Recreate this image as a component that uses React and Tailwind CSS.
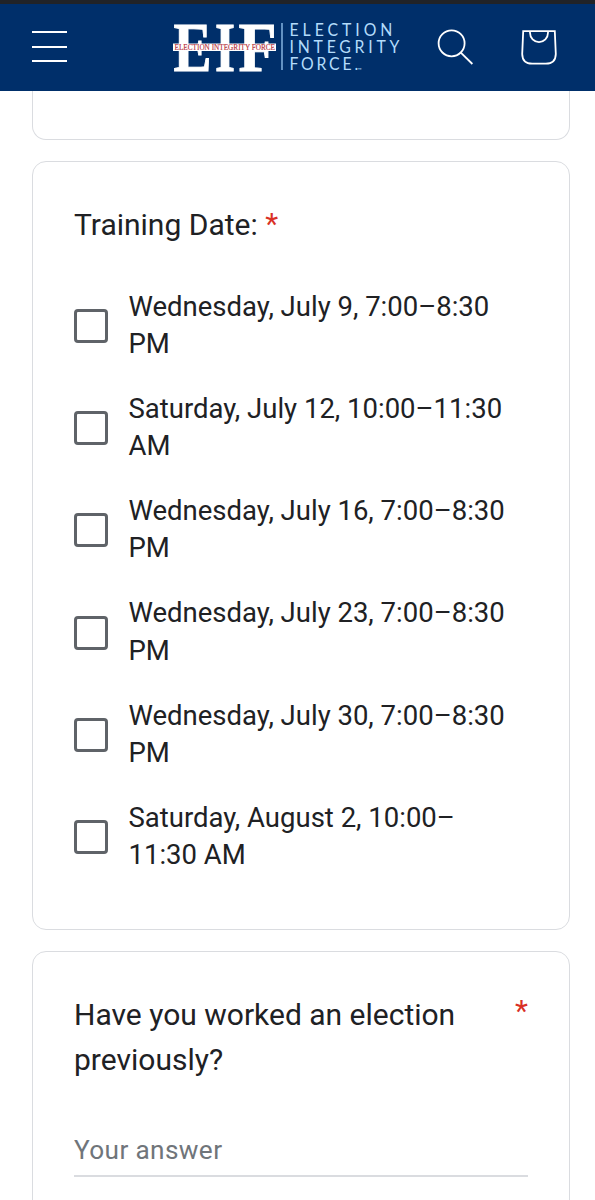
const trainingDates = [
  'Wednesday, July 9, 7:00–8:30 PM',
  'Saturday, July 12, 10:00–11:30 AM',
  'Wednesday, July 16, 7:00–8:30 PM',
  'Wednesday, July 23, 7:00–8:30 PM',
  'Wednesday, July 30, 7:00–8:30 PM',
  'Saturday, August 2, 10:00–11:30 AM',
]

function Logo() {
  return (
    <svg width="232" height="87" viewBox="172 4 232 87" role="img" aria-label="Election Integrity Force">
      <g fill="#fff" stroke="#fff" strokeWidth="1" fontFamily="Liberation Serif, serif" fontWeight="700" fontSize="70">
        <text x="173.5" y="70.5" textLength="38" lengthAdjust="spacingAndGlyphs">E</text>
        <text x="215" y="70.5" textLength="20" lengthAdjust="spacingAndGlyphs">I</text>
        <text x="238.5" y="70.5" textLength="38" lengthAdjust="spacingAndGlyphs">F</text>
      </g>
      {/* white band across the letters */}
      <rect x="173" y="43.5" width="103" height="7.5" fill="#fff" />
      <text x="174.5" y="50.2" textLength="100.5" lengthAdjust="spacingAndGlyphs" fill="#b5303a" stroke="#b5303a" strokeWidth="0.15" fontFamily="Liberation Serif, serif" fontSize="8.8">
        ELECTION INTEGRITY FORCE
      </text>
      <path d="M282 23v47" stroke="#8dbce8" strokeWidth="1.4" />
      <g transform="translate(289.5 0) scale(0.88 1)" fill="#b3dcfb" fontFamily="Lato, sans-serif" fontSize="18">
        <text x="0" y="36" textLength="117">ELECTION</text>
        <text x="0" y="53" textLength="125">INTEGRITY</text>
        <text x="0" y="70" textLength="78">FORCE.</text>
        <text x="77.5" y="72.5" fontSize="6">™</text>
      </g>
    </svg>
  )
}

function Header() {
  return (
    <header className="flex h-[91px] shrink-0 items-center border-t-4 border-[#212327] bg-[#002f6a] pl-8 text-white">
      <button aria-label="Menu" className="mb-[2px] flex w-[35px] flex-col gap-[12.5px]">
        <span className="h-[2px] bg-white" />
        <span className="h-[2px] bg-white" />
        <span className="h-[2px] bg-white" />
      </button>
      <div className="ml-[105px]">
        <Logo />
      </div>
      <button aria-label="Search" className="ml-[33px]">
        <svg width="38" height="38" viewBox="0 0 38 38" fill="none" stroke="currentColor" strokeWidth="1.8">
          <circle cx="14.6" cy="14.3" r="13" />
          <path d="M23.8 23.6l11.6 11.4" />
        </svg>
      </button>
      <button aria-label="Cart" className="ml-[44.5px]">
        <svg width="38" height="38" viewBox="0 0 38 38" fill="none" stroke="currentColor" strokeWidth="1.8">
          <path d="M3.2 2.2H34.8L35.8 25q-.2 9.7-10 9.7h-13.6q-9.8 0-10-9.7z" />
          <path d="M10 2.2v1.6a9 9.3 0 0 0 18 0V2.2" />
        </svg>
      </button>
    </header>
  )
}

function DateOption({ label }) {
  return (
    <label className="flex items-center">
      <input
        type="checkbox"
        className="size-[34px] shrink-0 appearance-none rounded-[4px] border-[3.5px] border-[#5f6368]"
      />
      <span className="-mt-px mb-px ml-[20.5px] w-[385px] text-[27.5px] leading-[37.3px]">{label}</span>
    </label>
  )
}

export default function App() {
  return (
    <div className="flex h-[1200px] w-[595px] flex-col overflow-hidden bg-white font-['Roboto',sans-serif] text-[#202124]">
      <Header />
      <main className="flex flex-col pr-[25px] pl-8">
        <div className="h-[49px] rounded-b-[14px] border border-t-0 border-[#dadce0]" />

        <section className="mt-[21px] h-[769px] rounded-[14px] border border-[#dadce0] px-[41px] pt-[39.5px]">
          <h2 className="text-[30px] leading-[45px]">
            Training Date: <span className="inline-block -translate-y-px text-[#d93025]">*</span>
          </h2>
          <div className="mt-[42.3px] flex flex-col gap-[27.6px]">
            {trainingDates.map((label) => (
              <DateOption key={label} label={label} />
            ))}
          </div>
        </section>

        <section className="mt-[21px] h-[300px] rounded-[14px] border border-[#dadce0] px-[41px] pt-[40px]">
          <h2 className="flex justify-between text-[30px] leading-[45px]">
            <span className="w-[400px]">Have you worked an election previously?</span>
            <span className="-mt-[4px] text-[#d93025]">*</span>
          </h2>
          <input
            placeholder="Your answer"
            className="mt-[43px] block h-[52px] w-full border-b-2 border-[#dadce0] text-[26.2px] tracking-[0.37px] outline-none placeholder:text-[#70757a]"
          />
        </section>
      </main>
    </div>
  )
}
